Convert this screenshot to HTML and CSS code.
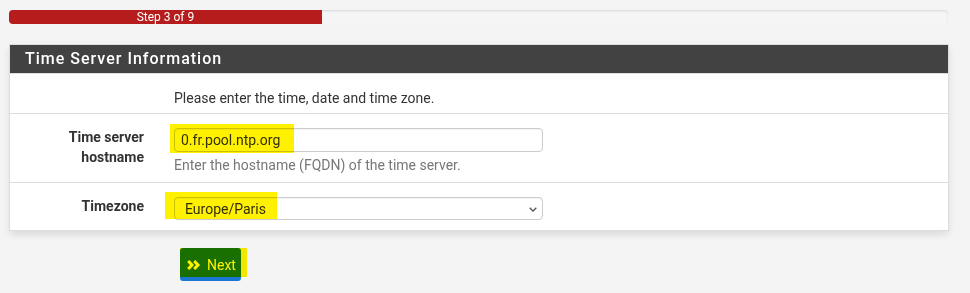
FILE: index.html
```html
<!DOCTYPE html>
<html lang="en">
<head>
<meta charset="utf-8">
<title>Wizard - Time Server Information</title>
<link rel="stylesheet" href="styles.css">
</head>
<body>
<div class="page">
  <div class="progress">
    <div class="progress-bar" style="width:33.33%">Step 3 of 9</div>
  </div>

  <div class="panel">
    <div class="panel-heading">
      <h2 class="panel-title">Time Server Information</h2>
    </div>
    <div class="form-row intro">
      <div class="label"></div>
      <div class="field">Please enter the time, date and time zone.</div>
    </div>
    <div class="form-row host">
      <label class="label" for="timeserver">Time server<br>hostname</label>
      <div class="field">
        <div class="control-wrap">
          <input id="timeserver" class="form-control" type="text" value="0.fr.pool.ntp.org">
          <span class="hl hl-input"></span>
        </div>
        <span class="help">Enter the hostname (FQDN) of the time server.</span>
      </div>
    </div>
    <div class="form-row tz">
      <label class="label tz-label" for="timezone">Timezone</label>
      <div class="field">
        <div class="control-wrap">
          <select id="timezone" class="form-select">
            <option selected>Europe/Paris</option>
          </select>
          <svg class="caret" width="8" height="5" viewBox="0 0 8 5" aria-hidden="true"><path d="M0.7 0.7 L4 4 L7.3 0.7" fill="none" stroke="#555" stroke-width="1.3"/></svg>
          <span class="hl hl-select"></span>
        </div>
      </div>
    </div>
  </div>

  <div class="actions">
    <div class="btn-wrap">
      <button class="btn" type="button">
        <svg class="chev" width="14" height="10" viewBox="0 0 14 10" aria-hidden="true"><path d="M1.2 1 L5 5 L1.2 9 M7.2 1 L11 5 L7.2 9" fill="none" stroke="#fff" stroke-width="3" stroke-linejoin="miter"/></svg>
        <span>Next</span>
      </button>
      <span class="hl hl-btn"></span>
    </div>
  </div>
</div>
</body>
</html>
```

FILE: styles.css
```css
* { box-sizing: border-box; }

html, body {
  margin: 0;
  background: #f4f4f4;
  font-family: Roboto, "Liberation Sans", sans-serif;
  font-size: 14px;
  line-height: 20px;
  color: #333;
}

.page {
  width: 940px;
  margin-left: 9px;
  padding-top: 10px;
}

/* progress */
.progress {
  width: 939px;
  height: 14px;
  background: #f5f5f5;
  border-radius: 4px;
  box-shadow: inset 0 1px 2px rgba(0, 0, 0, 0.12);
  overflow: hidden;
  display: flex;
}
.progress-bar {
  height: 14px;
  background: #b71c1c;
  color: #fff;
  font-size: 12px;
  line-height: 14px;
  text-align: center;
}

/* panel */
.panel {
  margin-top: 20px;
  background: #fff;
  border: 1px solid #ddd;
  box-shadow: 0 4px 8px -1px rgba(0, 0, 0, 0.12);
}
.panel-heading {
  background: #424242;
  height: 28px;
  padding-left: 15px;
}
.panel-title {
  margin: 0;
  color: #fff;
  font-size: 16px;
  font-weight: 500;
  line-height: 28px;
  letter-spacing: 1px;
}

.form-row {
  display: grid;
  grid-template-columns: 134px 369px;
  column-gap: 30px;
  border-top: 1px solid #ddd;
}
.form-row.intro { padding: 14px 0 5px; }
.form-row.host { padding: 13px 0 7px; }
.form-row.tz { padding: 14px 0 10px; }

.label {
  text-align: right;
  font-weight: 700;
  color: #333;
}
.host .field { padding-top: 1px; }
.tz-label { margin-top: -1px; }

.field {
  display: flex;
  flex-direction: column;
}

.control-wrap {
  position: relative;
  display: flex;
}

.form-control,
.form-select {
  width: 369px;
  height: 24px;
  border: 1px solid #ccc;
  border-radius: 4px;
  background: #fff;
  font-family: Roboto, "Liberation Sans", sans-serif;
  font-size: 14px;
  color: #333;
  box-shadow: inset 0 1px 1px rgba(0, 0, 0, 0.05);
  margin: 0;
}
.form-control { padding: 0 6px; }
.form-select {
  height: 23px;
  padding: 0 10px;
  appearance: none;
  -webkit-appearance: none;
}

.caret {
  position: absolute;
  right: 6px;
  top: 10px;
}

.help {
  margin-top: 3px;
  color: #777;
}

/* highlighter marks */
.hl {
  position: absolute;
  background: #fff100;
  mix-blend-mode: multiply;
  pointer-events: none;
}
.hl-input { left: -4px; top: -4px; width: 124px; height: 29px; }
.hl-select { left: -9px; top: -5px; width: 112px; height: 27px; }
.hl-btn { left: 0; top: 0; width: 67px; height: 29px; }

/* actions */
.actions {
  margin-top: 17px;
  padding-left: 171px;
}
.btn-wrap {
  position: relative;
  display: inline-flex;
}
.btn {
  display: inline-flex;
  align-items: center;
  gap: 6px;
  height: 33px;
  padding: 0 5px 0 7px;
  border: 0;
  border-radius: 3px;
  background: #1976d2;
  color: #fff;
  font-family: Roboto, "Liberation Sans", sans-serif;
  font-size: 14px;
  line-height: 20px;
}
.chev { display: block; }
```
